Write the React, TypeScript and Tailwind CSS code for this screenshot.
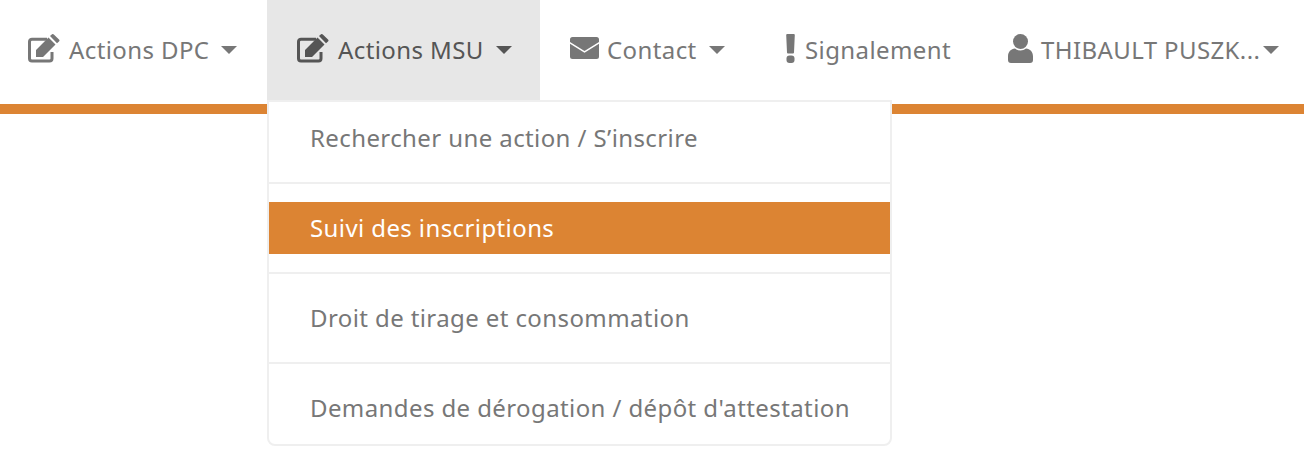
import type { ReactNode } from "react";

function EditIcon() {
  return (
    <svg width="32" height="29" viewBox="0 0 32 29" className="shrink-0">
      <path
        d="M24 18v6.500a2.500 2.500 0 0 1-2.500 2.500H4a2.500 2.500 0 0 1-2.500-2.500V7.700A2.500 2.500 0 0 1 4 5.200h15"
        fill="none"
        stroke="currentColor"
        strokeWidth="3"
      />
      <path
        d="M8 16 20.500 3.500 27.500 10.500 15 23H8zM22 2l1.700-1.500a1.500 1.500 0 0 1 2.100 0l5.200 5a1.500 1.500 0 0 1 0 2.100L29 9.200z"
        fill="currentColor"
      />
    </svg>
  );
}

function EnvelopeIcon() {
  return (
    <svg width="29" height="22" viewBox="0 0 29 22" className="shrink-0" fill="currentColor">
      <path d="M2.500 0h24A2.500 2.500 0 0 1 29 2.500v2.500L14.500 14 0 5V2.500A2.500 2.500 0 0 1 2.500 0z" />
      <path d="M0 6.800l14.500 9L29 6.800v12.700a2.500 2.500 0 0 1-2.500 2.500h-24A2.500 2.500 0 0 1 0 19.500z" />
    </svg>
  );
}

function BangIcon() {
  return (
    <svg width="9" height="29" viewBox="0 0 9 29" className="shrink-0" fill="currentColor">
      <path d="M1.200 0h6.600a1 1 0 0 1 1 1L8 18.500a1 1 0 0 1-1 1H2a1 1 0 0 1-1-1L.2 1a1 1 0 0 1 1-1z" />
      <rect x="0.500" y="21.500" width="8" height="7.500" rx="3" />
    </svg>
  );
}

function UserIcon() {
  return (
    <svg width="25" height="29" viewBox="0 0 25 29" className="shrink-0" fill="currentColor">
      <ellipse cx="12.500" cy="7.500" rx="7.500" ry="7.500" />
      <path d="M7 14.500c1.500 1.300 3.500 2 5.500 2s4-.7 5.500-2c4 .5 7 3 7 8V26a3 3 0 0 1-3 3H3a3 3 0 0 1-3-3v-3.500c0-5 3-7.500 7-8z" />
    </svg>
  );
}

function Caret({ className }: { className: string }) {
  return (
    <span
      className={`w-0 h-0 shrink-0 border-x-[8.500px] border-x-transparent border-t-[8px] border-t-current ${className}`}
    />
  );
}

function NavItem({
  icon,
  label,
  caretClass,
  active = false,
  gap,
  className,
}: {
  icon: ReactNode;
  label: string;
  caretClass?: string;
  active?: boolean;
  gap: string;
  className: string;
}) {
  return (
    <div
      className={`h-[100px] flex items-center ${
        active ? "bg-[#e7e7e7] text-[#555555]" : "text-[#777777]"
      } ${className}`}
    >
      <span className={`flex items-center ${gap}`}>
        <span className="flex mb-[4px]">{icon}</span>
        <span className="whitespace-nowrap">{label}</span>
      </span>
      {caretClass && <Caret className={caretClass} />}
    </div>
  );
}

const menuItems = [
  "Rechercher une action / S’inscrire",
  "Suivi des inscriptions",
  "Droit de tirage et consommation",
  "Demandes de dérogation / dépôt d'attestation",
];

export default function App() {
  return (
    <div className="relative h-[466px] bg-white text-[24px] tracking-[0.4px] font-['Noto_Sans',sans-serif] overflow-hidden">
      <nav className="flex h-[104px]">
        <NavItem icon={<EditIcon />} label="Actions DPC" caretClass="ml-[12px]" gap="gap-[9px]" className="w-[267px] pl-[28px]" />
        <NavItem icon={<EditIcon />} label="Actions MSU" caretClass="ml-[12px]" gap="gap-[9px]" active className="w-[273px] pl-[30px]" />
        <NavItem icon={<EnvelopeIcon />} label="Contact" caretClass="ml-[12px]" gap="gap-[8px]" className="w-[216px] pl-[30px]" />
        <NavItem icon={<BangIcon />} label="Signalement" gap="gap-[10px]" className="w-[222px] pl-[30px]" />
        <NavItem icon={<UserIcon />} label="THIBAULT PUSZK..." caretClass="ml-[3px]" gap="gap-[8px]" className="flex-1 pl-[30px]" />
      </nav>
      <div className="h-[10px] bg-[#dc8433]" />

      {/* Menu déroulant */}
      <div className="absolute left-[267px] top-[100px] w-[625px] h-[346px] pt-[10px] bg-white border-2 border-[#efefef] rounded-b-lg">
        {menuItems.map((item, i) => (
          <div key={item}>
            {i > 0 && <div className="h-[2px] my-[18px] bg-[#efefef]" />}
            <div
              className={`h-[52px] pl-[41px] flex items-center whitespace-nowrap ${
                i === 1 ? "bg-[#dc8433] text-white" : "text-[#777777]"
              }`}
            >
              {item}
            </div>
          </div>
        ))}
      </div>
    </div>
  );
}
